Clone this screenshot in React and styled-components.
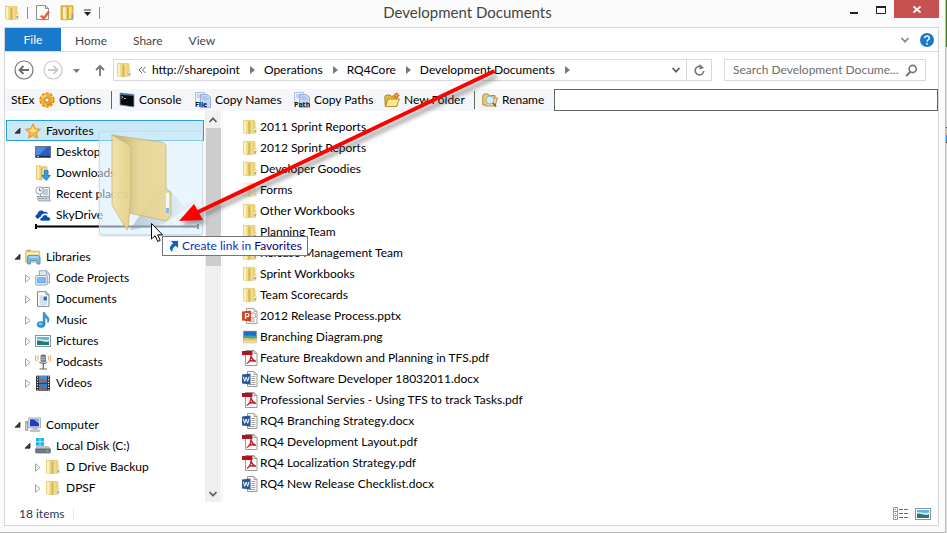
import React from 'react';
import styled, { createGlobalStyle, css } from 'styled-components';

const Global = createGlobalStyle`
  * { box-sizing: border-box; }
  body { margin: 0; background: #e9e9e9; }
  button, input { font: inherit; color: inherit; margin: 0; padding: 0; border: 0; background: none; }
  body, button, input { font-family: Lato, "Open Sans", sans-serif; }
  ul { list-style: none; margin: 0; padding: 0; }
`;

const Desktop = styled.div`
  display: flex;
  min-height: 100vh;
  padding-right: 1px;
  background: linear-gradient(#4c7a1c 0 47px, #dcdcdc 47px 127px, #3a3a3a 127px 128px, #c4c4c4 128px 135px, #2f8fd0 135px 142px, #333 142px 143px, #dcdcdc 143px);
`;
const Window = styled.div`
  position: relative;
  flex: 1;
  min-width: 0;
  display: flex;
  flex-direction: column;
  height: 100vh;
  padding: 0 6px 6px 4px;
  background: #fbfbfb;
  border-right: 1px solid #bdbdbd;
  border-bottom: 1px solid #b8b8b8;
  font-size: 12px;
  line-height: 20px;
  color: #000;
`;
const TitleBar = styled.header`
  display: grid;
  grid-template-columns: 1fr auto 1fr;
  height: 27px;
  flex: none;
`;
const QuickAccess = styled.div`
  display: flex;
  align-items: center;
  height: 25px;
  gap: 7px;
`;
const IconButton = styled.button`
  display: flex;
  align-items: center;
  justify-content: center;
  width: ${p => p.$w || 16}px;
  height: 20px;
  flex: none;
`;
const Divider = styled.span`
  width: 1px;
  height: ${p => p.$h || 12}px;
  margin: 0 ${p => p.$m || 0}px;
  background: ${p => p.$color || '#8c8c8c'};
  flex: none;
`;
const Title = styled.h1`
  margin: 0;
  padding-right: 8px;
  font-size: 15px;
  font-weight: 400;
  line-height: 25px;
  color: #444;
`;
const Controls = styled.div`
  display: flex;
  justify-content: flex-end;
  height: 18px;
`;
const WindowButton = styled.button`
  width: ${p => (p.$close ? 45 : 27)}px;
  height: 18px;
  background: ${p => (p.$close ? '#c75050' : 'none')};
  svg { display: block; margin: 0 auto; }
`;
const Panel = styled.div`
  flex: 1;
  min-height: 0;
  display: flex;
  flex-direction: column;
  border: 1px solid #d6d6d6;
  background: #fff;
`;
const Ribbon = styled.nav`
  display: flex;
  align-items: center;
  flex: none;
  height: 24px;
  border-bottom: 1px solid #d9d9d9;
`;
const Tab = styled.button`
  height: 23px;
  padding: 2px 13px 0;
  color: #444;
  ${p => p.$file && css`
    width: 56px;
    margin-right: 1px;
    padding: 0;
    background: #1979ca;
    color: #fff;
  `}
`;
const RibbonEnd = styled.div`
  display: flex;
  gap: 6px;
  margin-left: auto;
  padding-right: 3px;
`;
const AddressRow = styled.div`
  display: flex;
  align-items: center;
  flex: none;
  height: 37px;
  padding: 0 12px 1px 9px;
`;
const NavButtons = styled.div`
  display: flex;
  align-items: center;
  width: 99px;
  gap: 9px;
`;
const AddressBox = styled.div`
  display: flex;
  align-items: center;
  flex: 1;
  min-width: 0;
  height: 22px;
  padding-left: 2px;
  border: 1px solid #d9d9d9;
`;
const Crumb = styled.button`
  height: 20px;
  white-space: nowrap;
`;
const CrumbArrow = styled.svg`
  width: 5px;
  height: 8px;
  margin: 0 9px 0 10px;
  fill: #777;
  flex: none;
`;
const Fill = styled.span`
  flex: 1;
`;
const Refresh = styled.button`
  display: flex;
  align-items: center;
  justify-content: center;
  width: 25px;
  height: 20px;
  border-left: 1px solid #d9d9d9;
`;
const SearchBox = styled.label`
  display: flex;
  align-items: center;
  width: 202px;
  height: 22px;
  margin-left: 12px;
  padding: 0 7px 0 8px;
  border: 1px solid #d9d9d9;
  input { flex: 1; min-width: 0; outline: 0; }
  input::placeholder { color: #6d6d6d; opacity: 1; }
`;
const StExBar = styled.div`
  display: flex;
  align-items: center;
  flex: none;
  height: 22px;
  padding-left: 6px;
  background: #f4f6f9;
`;
const StExLabel = styled.span`
  width: 28px;
`;
const Tool = styled.button`
  display: flex;
  align-items: center;
  gap: 4px;
  height: 20px;
  width: ${p => p.$w}px;
  white-space: nowrap;
  flex: none;
`;
const CommandInput = styled.input`
  && {
    flex: 1;
    min-width: 0;
    height: 22px;
    padding: 0 4px;
    border: 1px solid #646464;
    background: #fff;
  }
`;
const Body = styled.div`
  display: flex;
  flex: 1;
  min-height: 0;
`;
const Sidebar = styled.nav`
  width: 200px;
  padding: 9px 0 0 1px;
  overflow: hidden;
  flex: none;
`;
const Group = styled.ul`
  & + & { margin-top: 21px; }
`;
const TreeRow = styled.button`
  display: grid;
  grid-template-columns: 11px 21px 1fr;
  align-items: center;
  width: 198px;
  height: 21px;
  padding-left: ${p => 7 + p.$level * 10}px;
  border: 1px solid transparent;
  text-align: left;
  white-space: nowrap;
  ${p => p.$selected && css`
    border-color: #26a0da;
    background: #cbe8f6;
  `}
`;
const Scrollbar = styled.div`
  display: flex;
  flex-direction: column;
  align-items: center;
  width: 16px;
  flex: none;
  background: #f0f0f0;
`;
const Thumb = styled.div`
  width: 15px;
  height: 138px;
  background: #cdcdcd;
`;
const ScrollButton = styled.button`
  display: flex;
  align-items: center;
  justify-content: center;
  width: 16px;
  height: 17px;
  &:last-child { margin-top: auto; }
`;
const Files = styled.main`
  flex: 1;
  min-width: 0;
  margin-left: 1px;
  padding: 5px 0 0 19px;
  border-left: 1px solid #f3f3f3;
`;
const FileRow = styled.a`
  display: flex;
  align-items: center;
  gap: 2px;
  height: 21px;
  color: #000;
  text-decoration: none;
  white-space: nowrap;
  svg { opacity: ${p => (p.$faded ? 0.45 : 1)}; }
`;
const StatusBar = styled.footer`
  display: flex;
  align-items: center;
  flex: none;
  height: 23px;
  padding: 0 7px 0 14px;
  color: #1e395b;
`;
const StatusText = styled.span`
  width: 54px;
`;
const ViewButtons = styled.div`
  display: flex;
  gap: 6px;
  margin-left: auto;
`;

/* Parts that float above the window while an item is dragged */
const DropMarker = styled.svg`
  position: absolute;
  left: 35px;
  top: 223px;
`;
const Ghost = styled.div`
  position: absolute;
  left: 99px;
  top: 131px;
  width: 104px;
  height: 104px;
  border: 1px solid rgba(190, 215, 232, 0.7);
  border-radius: 3px;
  background: linear-gradient(160deg, rgba(208, 234, 250, 0.5), rgba(222, 241, 252, 0.65));
  box-shadow: 0 1px 2px rgba(120, 140, 160, 0.4);
  pointer-events: none;
`;
const DragArrow = styled.svg`
  position: absolute;
  left: 170px;
  top: 62px;
  pointer-events: none;
`;
const DropTip = styled.div`
  position: absolute;
  left: 162px;
  top: 236px;
  display: flex;
  align-items: center;
  gap: 2px;
  height: 20px;
  padding: 0 5px 0 3px;
  border: 1px solid #767676;
  background: #fff;
  color: #0a2fc4;
  white-space: nowrap;
  b { font-weight: 400; color: #000080; }
`;
const Cursor = styled.svg`
  position: absolute;
  left: 150px;
  top: 222px;
  pointer-events: none;
`;

const S = ({ w = 16, h = 16, children }) => (
  <svg width={w} height={h} viewBox={`0 0 ${w} ${h}`} fill="none" aria-hidden="true">{children}</svg>
);

const Folder = () => (
  <S>
    <path d="M7 1.500h5.200q.8 0 .8.800V8l1 .8v4.700l-1 .8H7z" fill="#ecd47a" stroke="#dcc067" strokeWidth=".6" />
    <path d="M1.500 1.300h5.300q.7 0 .7.800v12.700H6L1.500 14z" fill="#f1dc8a" stroke="#dcc067" strokeWidth=".6" />
    <path d="M3 2v12" stroke="#fbf3bf" strokeWidth="2" />
    <path d="M6.500 2.500v12" stroke="#dcbf62" />
    <path d="M8 3v11.500" stroke="#c9a94c" />
    <path d="M9.500 2.500v11.500" stroke="#f3e19a" strokeWidth="1.500" />
    <path d="M13.200 9.500v3.500" stroke="#fff" strokeWidth="1.200" />
    <path d="M13.200 11v2" stroke="#4a9fe0" strokeWidth="1.200" />
  </S>
);
const OpenFolder = () => (
  <S>
    <path d="M2 .8h12v13.700H2z" fill="#efc64a" stroke="#c99a2c" strokeWidth=".8" />
    <path d="M3.500 1.500H8v14L3.500 14z" fill="#f8e796" stroke="#cda23a" strokeWidth=".6" />
    <path d="M5 2.500v11.500" stroke="#fdf7cc" strokeWidth="1.400" />
    <path d="M8.700 2.500v12.200" stroke="#c79c35" strokeWidth="1.200" />
    <path d="M10 2h2.500v11H10z" fill="#f7dd7c" />
    <path d="M13.200 9.500v4" stroke="#4aa3dc" strokeWidth="1.200" />
  </S>
);
const CheckDoc = () => (
  <S w={16} h={17}>
    <path d="M1.500 1.500h9l3 3v11h-12z" fill="#fdfdfd" stroke="#8d8d8d" />
    <path d="M10.500 1.500v3h3" stroke="#8d8d8d" />
    <path d="M6 11.500l2.700 3 5.300-7" stroke="#e4683c" strokeWidth="2.600" />
  </S>
);
const Star = () => (
  <S>
    <path d="M8 .8l2.200 4.900 5.200.6-3.900 3.600 1.100 5.300L8 12.500l-4.600 2.700 1.100-5.300L.6 6.300l5.200-.6z" fill="#fbb83a" stroke="#e58a2c" strokeWidth=".9" />
    <path d="M8 3l1.500 3.500 3 .4L8 9.500 3.500 7l3-.5z" fill="#fee48b" />
  </S>
);
const DesktopIcon = () => (
  <S>
    <rect x=".5" y="2.500" width="15" height="11" fill="#2c5fbd" stroke="#5e7790" />
    <path d="M1 3h11L4 11H1z" fill="#5b92e2" opacity=".8" />
    <path d="M1 12.500h14" stroke="#1c2d4c" strokeWidth="1.500" />
    <path d="M2 12.500h2" stroke="#8fd16b" />
  </S>
);
const Downloads = () => (
  <S>
    <path d="M1.500.8h4l1 1h5.500v12h-5l-1 1.500-4.500-1.300z" fill="#ecd57d" stroke="#d5b85c" strokeWidth=".7" />
    <path d="M3.200 1.500v12" stroke="#fbf3bd" strokeWidth="1.800" />
    <path d="M6.500 3v11" stroke="#cdae50" />
    <path d="M9.500 5.500h3.500v5h2.500l-4.200 5-4.300-5h2.500z" fill="#3c9be2" stroke="#1c6fb5" strokeWidth=".8" />
  </S>
);
const Recent = () => (
  <S>
    <path d="M5.500 1.500h9v10h-9z" fill="#eef1f4" stroke="#9aa3ab" />
    <path d="M8 4h5M8 6h5M8 8h5" stroke="#96a8b8" />
    <path d="M2 10.500h11.500l2 4.500h-12z" fill="#cfd4d8" stroke="#8f989f" strokeWidth=".8" />
    <path d="M4 12.500h9" stroke="#8d969e" strokeDasharray="2 1" />
    <circle cx="4.500" cy="4.500" r="3.700" fill="#f7f9fb" stroke="#9ba4ac" />
    <path d="M4.500 2.300v2.400h2" stroke="#6a757f" />
  </S>
);
const SkyDrive = () => (
  <S>
    <path d="M4 11.500H2.600C-.2 11.300 0 7.500 2.500 7.300 2.500 4 6.800 2.200 9 5c2-.8 3.600.3 3.900 1.900C8.500 5.500 6 7.500 6 9.500c-1 .2-1.800 1-2 2z" fill="#0b4db0" />
    <path d="M6.500 14c-2.300-.3-2-3.500.6-3.600.2-3.300 5.100-3.700 5.700-.5 2.800-.4 3.700 3.700 1 4.100z" fill="#0b4db0" stroke="#fff" strokeWidth=".7" />
  </S>
);
const Libraries = () => (
  <S>
    <path d="M.7 2.500l1-1.500h4l1 1.200h8v11H.7z" fill="#edd98c" stroke="#c7b163" strokeWidth=".8" />
    <path d="M1.500 4.500H14" stroke="#fbf4cd" strokeWidth="1.500" />
    <path d="M2 2h3" stroke="#8abf59" strokeWidth="1.200" />
    <path d="M2.500 8l1-1.500h9.500l2 1.500v7h-3v-3.500H5.500V15h-3z" fill="#74bce8" stroke="#4189bb" strokeWidth=".8" />
    <path d="M4 8h9.500" stroke="#d0eefd" />
  </S>
);
const CodeLib = () => (
  <S>
    <path d="M4.500.7h7L14.500 4v9h-10z" fill="#dce8f2" stroke="#8ea1b1" strokeWidth=".9" />
    <path d="M11.500.7V4h3" stroke="#8ea1b1" strokeWidth=".9" />
    <rect x=".7" y="5.500" width="11.500" height="9.500" rx="1" fill="#eef5fb" stroke="#8499ab" strokeWidth=".9" />
    <rect x="2.700" y="7.800" width="7.500" height="5" fill="#7fbdf0" stroke="#4a8bc9" strokeWidth=".7" />
  </S>
);
const DocLib = () => (
  <S>
    <path d="M2.500.7h8.500l3 3v11.600H2.500z" fill="#fff" stroke="#7c868e" />
    <path d="M11 .7v3h3" stroke="#7c868e" />
    <path d="M4.500 5H8M4.500 7H8M4.500 9H8M4.500 11h7.500M4.500 13h7.500" stroke="#a9b7d6" strokeWidth=".9" />
    <rect x="8.500" y="5.500" width="3.500" height="4" fill="#2d6bb8" />
  </S>
);
const Music = () => (
  <S>
    <path d="M8.200.5h1.500c.8 3.300 4.300 3.800 4.300 7 0 1.600-.6 2.600-1.200 3.300.4-3-1-4.600-2.800-5V12.500H8.200z" fill="#3e9ad6" stroke="#2476b4" strokeWidth=".6" />
    <ellipse cx="6" cy="12.500" rx="4" ry="2.900" fill="#2f9ae4" stroke="#1c70b5" strokeWidth=".6" />
    <ellipse cx="5.300" cy="11.700" rx="1.800" ry="1" fill="#95d2f8" />
  </S>
);
const Pictures = () => (
  <S>
    <rect x=".5" y="2.500" width="15" height="11" fill="#fff" stroke="#8795a1" />
    <rect x="2" y="4" width="12" height="8" fill="#5eb3e8" />
    <path d="M2 6.500c3-1.500 7 1.500 12 0V10H2z" fill="#cdeaf5" />
    <path d="M2 8c3-1.500 6 2 12 .5V12H2z" fill="#237a6d" />
  </S>
);
const Podcasts = () => (
  <S>
    <rect x="5.500" y=".5" width="5.500" height="8" rx="2" fill="#5d6b7a" />
    <path d="M7 2v6M9 2v6M5.500 3.500H11M5.500 5.500H11" stroke="#c3ccd4" strokeWidth=".6" />
    <path d="M4.500 8c1 2 6.500 2 7.500 0M8.300 10v4.500M4.500 15h7.500" stroke="#5d6770" strokeWidth="1.200" />
    <path d="M3.500 2c-1 1.500-1 3 0 4.500M1.500 1C0 3 0 5.500 1.500 7.500M13 2c1 1.500 1 3 0 4.500M15 1c1.200 2 1.200 4.500 0 6.500" stroke="#ee9a44" />
  </S>
);
const Videos = () => (
  <S>
    <rect x="1" y=".7" width="14" height="15" fill="#2e3033" />
    <rect x="4" y="1" width="8" height="6.700" fill="#3c95d8" />
    <rect x="4" y="8.700" width="8" height="6.500" fill="#2f83c8" />
    <path d="M4 5l3-1.500 2 1.500 3-1v2.500L8 7zM4 13.500l3.500-2 4.500 2.500v1H8z" fill="#b4593e" />
    <path d="M2.500 1.500v14M13.500 1.500v14" stroke="#e4e8ea" strokeWidth="1.200" strokeDasharray="1.200 1.400" />
  </S>
);
const Computer = () => (
  <S>
    <rect x=".7" y="4.500" width="2" height="9" fill="#cdd3d6" stroke="#838b90" strokeWidth=".7" />
    <path d="M1 6h1.500" stroke="#5fc04d" />
    <rect x="3.700" y="1" width="11.800" height="9.800" fill="#e3e6ea" stroke="#9aa2aa" strokeWidth=".8" />
    <rect x="5" y="2.300" width="9" height="7" fill="#203bbd" />
    <path d="M8.500 2.300H14v4.500z" fill="#8db4f2" />
    <path d="M8 11h4v2h2.500v1.500h-9V13H8z" fill="#c3c8ce" stroke="#9aa2aa" strokeWidth=".5" />
  </S>
);
const Disk = () => (
  <S>
    <path d="M1 0h3.700v3.500H1zM5.300 0H9v3.500H5.300zM1 4.200h3.700v3.600H1zM5.300 4.200H9v3.600H5.300z" fill="#15b5ec" />
    <path d="M2 8.700h11.500L15.500 11H.5z" fill="#c4cace" stroke="#858d92" strokeWidth=".6" />
    <rect x=".5" y="11" width="15" height="4" rx="1" fill="#6e7b86" stroke="#4f5a63" strokeWidth=".6" />
    <path d="M11.500 13h2" stroke="#66e06f" strokeWidth="1.200" />
  </S>
);
const Gear = () => (
  <S>
    <circle cx="8" cy="8" r="6.300" stroke="#d9860f" strokeWidth="2.600" strokeDasharray="2.800 1.148" />
    <circle cx="8" cy="8" r="4.400" stroke="#f6ae23" strokeWidth="4" />
    <circle cx="8" cy="8" r="2.300" fill="#f4f6f9" stroke="#a8610a" strokeWidth=".9" />
    <path d="M3.500 6c.8-1.600 2.200-2.500 4-2.600" stroke="#fde18a" strokeWidth="1.500" />
    <path d="M12.500 10c-1 2-2.500 2.800-4.300 2.800" stroke="#d87d10" strokeWidth="1.300" />
  </S>
);
const Console = () => (
  <S>
    <path d="M1 1l14 1.500v12.500L1 13z" fill="#070b12" stroke="#8fa5ba" strokeWidth=".8" />
    <path d="M1 1.300l14 1.400v1.300L1 2.800z" fill="#54779c" />
    <path d="M2.500 4.500l1.500.8-1.500.8M5 6.500h2" stroke="#ddd" strokeWidth=".8" />
  </S>
);
const CopyDoc = ({ label }) => (
  <S>
    <path d="M.5.5h9v10h-9z" fill="#e7f0fb" stroke="#9db5db" strokeWidth=".8" />
    <path d="M5.500 2.500H12L15.500 5v10.500h-10z" fill="#c3d8f5" stroke="#8aa6d4" strokeWidth=".8" />
    <path d="M2 3h5M2 5h5M7.500 5H12M7.500 7h6" stroke="#8fabd9" strokeWidth=".8" />
    <text x="0" y="14.500" fontFamily="Open Sans, sans-serif" fontSize="7" fontWeight="700" fill="#0a0a14">{label}</text>
  </S>
);
const NewFolderIcon = () => (
  <S>
    <path d="M.8 4.500L2 3h4l1 1.200h6V14H1.200z" fill="#e4b83b" stroke="#9c7420" strokeWidth=".8" />
    <path d="M4 7h11.500L12.500 14.500H1.500z" fill="#fbe48a" stroke="#a97f24" strokeWidth=".8" />
    <path d="M12.500 .5v6M9.500 3.500h6M10.500 1.500l4 4M14.500 1.500l-4 4" stroke="#e85a1e" strokeWidth="1.100" />
    <circle cx="12.500" cy="3.500" r="1.200" fill="#ffb13a" />
  </S>
);
const RenameIcon = () => (
  <S>
    <path d="M.8 3.500L2 2h4l1.200 1.500H13V13H.8z" fill="#f2cd5e" stroke="#9c7420" strokeWidth=".8" />
    <path d="M12 6h3.500L13 14H3" fill="#fbe08a" stroke="#a97f24" strokeWidth=".8" />
    <circle cx="8" cy="8" r="3.900" fill="#d9effc" stroke="#8db4d3" strokeWidth="1.100" />
    <path d="M11 11l3 3.500" stroke="#8a5a1c" strokeWidth="1.800" />
  </S>
);
const Pptx = () => (
  <S>
    <path d="M4.500.5H12l3 3v12H4.500z" fill="#fff" stroke="#a1a1a1" />
    <path d="M12 .5v3h3M7 12h6M7 13.700h6" stroke="#a1a1a1" strokeWidth=".8" />
    <circle cx="11" cy="7.500" r="2.700" stroke="#e08166" />
    <path d="M0 3.500l9-1v11l-9-1z" fill="#d24625" />
    <path d="M3.500 11V5.500h1.800c2.200 0 2.200 3.200 0 3.200H3.500" stroke="#fff" strokeWidth="1.200" />
  </S>
);
const Png = () => (
  <S>
    <path d="M1.300 2h13.400v12H1.300z" fill="#e9dcae" stroke="#cfc59d" strokeWidth=".6" />
    <path d="M1.500 2.200h13v7h-13z" fill="#1d6fc8" />
    <path d="M1.500 7.500c2-3 3.500 0 5-1s3 1.500 8-.2V10h-13z" fill="#3da4a8" />
    <path d="M1.500 9.500c4-1.500 7 1 13-.5v2.500h-13z" fill="#f1bd4c" />
  </S>
);
const Pdf = () => (
  <S>
    <path d="M3.500.5H12l3 3v12H3.500z" fill="#fff" stroke="#9a9a9a" />
    <path d="M12 .5v3h3" stroke="#9a9a9a" />
    <path d="M0 1h10.500v4H0z" fill="#b3141c" />
    <path d="M9 4.500c.3 4.500-2 8.300-4.300 9M9.200 6.500c.8 2.500 2.300 4.200 4.800 4.800M6.500 11.300c2-.6 4.500-.9 7.500 0" stroke="#c01a22" strokeWidth="1.300" />
  </S>
);
const Docx = () => (
  <S>
    <path d="M5.500.5H12l3 3v12H5.500z" fill="#fff" stroke="#9a9a9a" />
    <path d="M12 .5v3h3M9.500 5.500h4M9.500 7.500h4M9.500 9.500h4M9.500 11.500h4M7 13.500h6.500" stroke="#9a9a9a" strokeWidth=".9" />
    <path d="M0 3.500l8.500-1v11l-8.500-1z" fill="#2a5699" />
    <path d="M1.300 5.700l1.400 4.600L4.200 6l1.500 4.300 1.400-4.600" stroke="#fff" />
  </S>
);

const CaretDown = ({ line }) => (
  <S w={9} h={8}>
    {line && <path d="M1 1h7" stroke="#333" />}
    <path d="M1 3h7L4.500 7z" fill={line ? '#222' : '#777'} />
  </S>
);
const Chevron = ({ up, color = '#606060' }) => (
  <S w={10} h={8}>
    <path d={up ? 'M1.500 6L5 2.300 8.500 6' : 'M1.500 2L5 5.700 8.500 2'} stroke={color} strokeWidth="1.800" />
  </S>
);
const Expander = ({ state }) => {
  if (state === 'open') return <S w={8} h={8}><path d="M6 1.200v5H1z" fill="#3a3a3a" stroke="#262626" strokeWidth=".8" /></S>;
  if (state === 'closed') return <S w={8} h={9}><path d="M1.500 .8v7.400L6 4.500z" stroke="#a3a3a3" /></S>;
  return <span />;
};

const tree = [
  [
    ['Favorites', Star, 0, 'open', true],
    ['Desktop', DesktopIcon, 1],
    ['Downloads', Downloads, 1],
    ['Recent places', Recent, 1],
    ['SkyDrive', SkyDrive, 1],
  ],
  [
    ['Libraries', Libraries, 0, 'open'],
    ['Code Projects', CodeLib, 1, 'closed'],
    ['Documents', DocLib, 1, 'closed'],
    ['Music', Music, 1, 'closed'],
    ['Pictures', Pictures, 1, 'closed'],
    ['Podcasts', Podcasts, 1, 'closed'],
    ['Videos', Videos, 1, 'closed'],
  ],
  [
    ['Computer', Computer, 0, 'open'],
    ['Local Disk (C:)', Disk, 1, 'open'],
    ['D Drive Backup', Folder, 2, 'closed'],
    ['DPSF', Folder, 2, 'closed'],
    ['', Folder, 2],
  ],
];

const files = [
  ['2011 Sprint Reports', Folder],
  ['2012 Sprint Reports', Folder],
  ['Developer Goodies', Folder],
  ['Forms', Folder, true],
  ['Other Workbooks', Folder],
  ['Planning Team', Folder],
  ['Release Management Team', Folder],
  ['Sprint Workbooks', Folder],
  ['Team Scorecards', Folder],
  ['2012 Release Process.pptx', Pptx],
  ['Branching Diagram.png', Png],
  ['Feature Breakdown and Planning in TFS.pdf', Pdf],
  ['New Software Developer 18032011.docx', Docx],
  ['Professional Servies - Using TFS to track Tasks.pdf', Pdf],
  ['RQ4 Branching Strategy.docx', Docx],
  ['RQ4 Development Layout.pdf', Pdf],
  ['RQ4 Localization Strategy.pdf', Pdf],
  ['RQ4 New Release Checklist.docx', Docx],
];

const crumbs = ['http://sharepoint', 'Operations', 'RQ4Core', 'Development Documents'];

export default function App() {
  return (
    <Desktop>
      <Global />
      <Window>
        <TitleBar>
          <QuickAccess>
            <IconButton aria-label="Window menu"><Folder /></IconButton>
            <Divider />
            <IconButton aria-label="Properties"><CheckDoc /></IconButton>
            <IconButton $w={18} aria-label="New folder"><OpenFolder /></IconButton>
            <IconButton $w={9} aria-label="Customize toolbar"><CaretDown line /></IconButton>
            <Divider />
          </QuickAccess>
          <Title>Development Documents</Title>
          <Controls>
            <WindowButton aria-label="Minimize"><S w={12} h={14}><path d="M2 11h8" stroke="#222" strokeWidth="2" /></S></WindowButton>
            <WindowButton aria-label="Maximize"><S w={12} h={14}><path d="M1.500 4.500h9v7h-9z" stroke="#222" /><path d="M1 5h10" stroke="#222" strokeWidth="2" /></S></WindowButton>
            <WindowButton $close aria-label="Close"><S w={12} h={14}><path d="M2.500 4.500l7 6M9.500 4.500l-7 6" stroke="#fff" strokeWidth="1.800" /></S></WindowButton>
          </Controls>
        </TitleBar>
        <Panel>
          <Ribbon>
            <Tab $file>File</Tab>
            <Tab>Home</Tab>
            <Tab>Share</Tab>
            <Tab>View</Tab>
            <RibbonEnd>
              <IconButton aria-label="Expand the ribbon"><Chevron color="#8a8a8a" /></IconButton>
              <IconButton aria-label="Help">
                <S>
                  <circle cx="8" cy="8" r="7" fill="#1979ca" />
                  <path d="M5.700 6.300c0-3.200 4.800-2.900 4.600-.2C10.200 7.800 8 7.800 8 9.800M8 11v1.700" stroke="#fff" strokeWidth="1.500" />
                </S>
              </IconButton>
            </RibbonEnd>
          </Ribbon>
          <AddressRow>
            <NavButtons>
              <IconButton $w={20} aria-label="Back">
                <S w={20} h={20}><circle cx="10" cy="10" r="9" stroke="#757575" strokeWidth="1.200" /><path d="M15 10H6M9.500 6l-4 4 4 4" stroke="#6a6a6a" strokeWidth="1.800" /></S>
              </IconButton>
              <IconButton $w={20} aria-label="Forward">
                <S w={20} h={20}><circle cx="10" cy="10" r="9" stroke="#c9c9c9" strokeWidth="1.200" /><path d="M5 10h9M10.500 6l4 4-4 4" stroke="#c9c9c9" strokeWidth="1.800" /></S>
              </IconButton>
              <IconButton $w={9} aria-label="Recent locations"><CaretDown /></IconButton>
              <IconButton $w={20} aria-label="Up">
                <S w={14} h={14}><path d="M7 13V3M3 7l4-4 4 4" stroke="#757575" strokeWidth="1.800" /></S>
              </IconButton>
            </NavButtons>
            <AddressBox>
              <Folder />
              <IconButton $w={20} aria-label="Previous locations">
                <S w={8} h={8}><path d="M4 1L1 4l3 3M7.500 1l-3 3 3 3" stroke="#666" /></S>
              </IconButton>
              {crumbs.map(c => (
                <React.Fragment key={c}>
                  <Crumb>{c}</Crumb>
                  <CrumbArrow viewBox="0 0 5 8" aria-hidden="true"><path d="M0 0v8l5-4z" /></CrumbArrow>
                </React.Fragment>
              ))}
              <Fill />
              <IconButton $w={20} aria-label="Show locations"><Chevron /></IconButton>
              <Refresh aria-label="Refresh">
                <S w={13} h={13}><path d="M8.500 2.700A4.300 4.300 0 1 0 10.800 7" stroke="#757575" strokeWidth="1.600" /><path d="M6.500 0v5.500L11 4z" fill="#757575" /></S>
              </Refresh>
            </AddressBox>
            <SearchBox>
              <input type="text" aria-label="Search" placeholder="Search Development Docume..." />
              <S w={13} h={13}><circle cx="7.700" cy="5" r="3.600" stroke="#757575" strokeWidth="1.600" /><path d="M5.200 7.700L1.200 12" stroke="#757575" strokeWidth="2" /></S>
            </SearchBox>
          </AddressRow>
          <StExBar>
            <StExLabel>StEx</StExLabel>
            <Tool $w={65}><Gear />Options</Tool>
            <Divider $h={18} $m={7} $color="#666" />
            <Tool $w={76}><Console />Console</Tool>
            <Tool $w={99}><CopyDoc label="File" />Copy Names</Tool>
            <Tool $w={90}><CopyDoc label="Path" />Copy Paths</Tool>
            <Tool $w={83}><NewFolderIcon />New Folder</Tool>
            <Divider $h={18} $m={7} $color="#666" />
            <Tool $w={72}><RenameIcon />Rename</Tool>
            <CommandInput type="text" aria-label="Command line" />
          </StExBar>
          <Body>
            <Sidebar aria-label="Navigation pane">
              {tree.map(group => (
                <Group key={group[0][0]}>
                  {group.map(([name, Icon, level, state, selected]) => (
                    <li key={name}>
                      <TreeRow $level={level} $selected={selected} aria-label={name || 'Folder'}>
                        <Expander state={state} />
                        <Icon />
                        <span>{name}</span>
                      </TreeRow>
                    </li>
                  ))}
                </Group>
              ))}
            </Sidebar>
            <Scrollbar>
              <ScrollButton aria-label="Scroll up"><Chevron up /></ScrollButton>
              <Thumb />
              <ScrollButton aria-label="Scroll down"><Chevron /></ScrollButton>
            </Scrollbar>
            <Files>
              <ul>
                {files.map(([name, Icon, faded]) => (
                  <li key={name}>
                    <FileRow href="#" $faded={faded}><Icon />{name}</FileRow>
                  </li>
                ))}
              </ul>
            </Files>
          </Body>
          <StatusBar>
            <StatusText>18 items</StatusText>
            <Divider $h={11} $color="#e6e6e6" />
            <ViewButtons>
              <IconButton aria-label="Details view">
                <S>
                  <path d="M.5 1.500h4v4h-4zM.5 5.500h4v4h-4zM.5 9.500h4v4h-4z" stroke="#8a9aab" />
                  <path d="M2 3.500h1M2 11.500h1" stroke="#2f8f5f" />
                  <path d="M2 7.500h1" stroke="#d04040" />
                  <path d="M6 3.500h4M11 3.500h4M6 7.500h4M11 7.500h4M6 11.500h4M11 11.500h4" stroke="#5b7390" />
                </S>
              </IconButton>
              <IconButton aria-label="Large icons view"><Pictures /></IconButton>
            </ViewButtons>
          </StatusBar>
        </Panel>

        <DropMarker width="164" height="7" viewBox="0 0 164 7" aria-hidden="true">
          <path d="M1 1v5M163 1v5M1 3.500h162" stroke="#000" strokeWidth="2" />
        </DropMarker>
        <Ghost>
          <svg width="102" height="102" viewBox="0 0 102 102" aria-hidden="true">
            <defs>
              <linearGradient id="front" x1="0" x2="1"><stop offset="0" stopColor="#f2e2a0" /><stop offset="1" stopColor="#e5cd7c" /></linearGradient>
              <linearGradient id="back" x1="0" x2="1"><stop offset="0" stopColor="#bda667" /><stop offset=".45" stopColor="#e6d28c" /><stop offset="1" stopColor="#ecd993" /></linearGradient>
              <linearGradient id="shade" x1="0" x2="1"><stop offset="0" stopColor="#7d98ab" stopOpacity=".5" /><stop offset="1" stopColor="#b9d0de" stopOpacity=".1" /></linearGradient>
            </defs>
            <path d="M30 98L62 50 84 74 97 66v14L84 78 64 92z" fill="url(#shade)" />
            <g opacity=".88">
              <path d="M12 3L61 10q5 1 5 5v43l5 2v23l-5 6-37-8z" fill="url(#back)" stroke="#c3ac68" strokeWidth=".8" />
              <path d="M12 3l16 9q3 2 3 6v45l-3 34-1 1L12 73z" fill="url(#front)" stroke="#c3ac68" strokeWidth=".8" />
              <path d="M66 61h3v20h-3z" fill="#f8fbfd" />
              <path d="M66 76h3v5h-3z" fill="#7fb0e6" />
            </g>
          </svg>
        </Ghost>
        <DragArrow width="340" height="170" viewBox="0 0 340 170" aria-hidden="true">
          <defs>
            <filter id="soft" x="-10%" y="-10%" width="120%" height="120%"><feGaussianBlur stdDeviation="2" /></filter>
          </defs>
          <g opacity=".5" filter="url(#soft)" transform="translate(3 4)">
            <path d="M324 10L30 149" stroke="#444" strokeWidth="4" />
            <path d="M9 159l15-17 9 16z" fill="#444" />
          </g>
          <path d="M324.500 9L28 150" stroke="#f00" strokeWidth="4" />
          <path d="M9 159l15-17 9 16z" fill="#f00" />
        </DragArrow>
        <DropTip>
          <S w={14} h={14}>
            <path d="M1 1h12v12H1z" fill="#f4f8fc" />
            <path d="M5 2h7v7L9.700 6.800C7 8.500 6.300 10 6.500 12.500 3 11 3 7 7.300 4.400z" fill="#0f5fc2" />
          </S>
          <span>Create link in <b>Favorites</b></span>
        </DropTip>
        <Cursor width="14" height="22" viewBox="0 0 14 22" aria-hidden="true">
          <path d="M1.500 1.500v15.500l3.600-3.300 2.600 5.800 2.500-1.100-2.500-5.600h4.800z" fill="#fff" stroke="#000" />
        </Cursor>
      </Window>
    </Desktop>
  );
}
